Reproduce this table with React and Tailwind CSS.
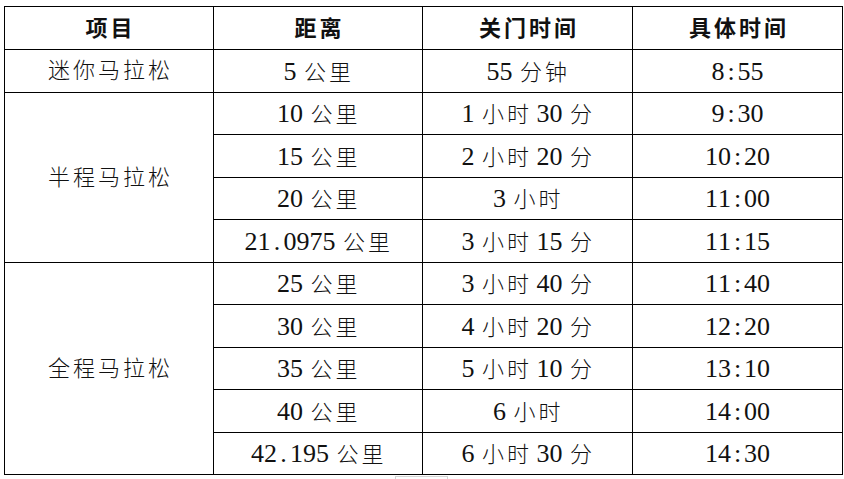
import React from "react";

const rows = [
  { name: "迷你马拉松", span: 1, cells: [["5 公里", "55 分钟", "8:55"]] },
  {
    name: "半程马拉松",
    span: 4,
    cells: [
      ["10 公里", "1 小时 30 分", "9:30"],
      ["15 公里", "2 小时 20 分", "10:20"],
      ["20 公里", "3 小时", "11:00"],
      ["21.0975 公里", "3 小时 15 分", "11:15"],
    ],
  },
  {
    name: "全程马拉松",
    span: 5,
    cells: [
      ["25 公里", "3 小时 40 分", "11:40"],
      ["30 公里", "4 小时 20 分", "12:20"],
      ["35 公里", "5 小时 10 分", "13:10"],
      ["40 公里", "6 小时", "14:00"],
      ["42.195 公里", "6 小时 30 分", "14:30"],
    ],
  },
];

// SimSun-like spacing: full width for CJK, half width for digits, narrow gap for spaces
const Txt = ({ s }) =>
  [...s].map((c, i) => {
    if (c.charCodeAt(0) > 0x2e80)
      return (
        <span key={i} className="inline-block w-[25px] text-center text-[22px] leading-none">
          {c}
        </span>
      );
    if (c === " ") return <span key={i} className="inline-block w-[6px]">{"\u00a0"}</span>;
    return (
      <span key={i} className="inline-block w-[13px] text-center text-[26px] leading-none">
        {c}
      </span>
    );
  });

const cell = "border border-black p-0 pt-[4px] text-center align-middle";

export default function App() {
  return (
    <div className="w-[844px] h-[479px] bg-white pt-[6px] pl-[4px] text-[#111] font-['Liberation_Serif','Noto_Sans_CJK_SC',serif] overflow-hidden">
      <table className="border-collapse table-fixed w-[838px]">
        <colgroup>
          <col className="w-[209px]" />
          <col className="w-[209px]" />
          <col className="w-[210px]" />
          <col className="w-[210px]" />
        </colgroup>
        <thead>
          <tr className="h-[43px]">
            {["项目", "距离", "关门时间", "具体时间"].map((h) => (
              <th key={h} className={cell + " font-bold"}>
                <Txt s={h} />
              </th>
            ))}
          </tr>
        </thead>
        <tbody className="font-light">
          {rows.map((g) =>
            g.cells.map((r, i) => (
              <tr key={g.name + i} className="h-[42.5px]">
                {i === 0 && (
                  <td rowSpan={g.span} className={cell}>
                    <Txt s={g.name} />
                  </td>
                )}
                {r.map((v, j) => (
                  <td key={j} className={cell}>
                    <Txt s={v} />
                  </td>
                ))}
              </tr>
            ))
          )}
        </tbody>
      </table>
      <div className="ml-[391px] mt-[1px] w-[53px] h-[4px] border-x border-t border-[#d4d4d4]"></div>
    </div>
  );
}
